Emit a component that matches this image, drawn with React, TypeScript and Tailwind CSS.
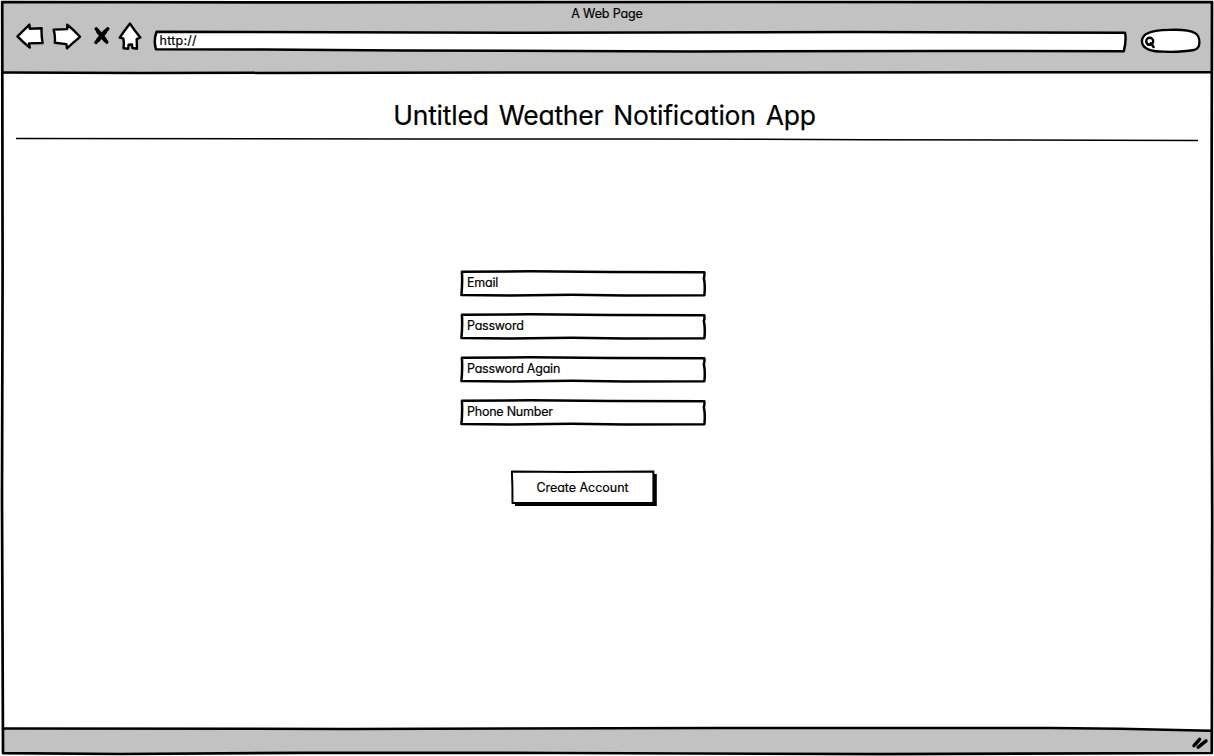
import type { ReactNode } from 'react';

const ink = {
  stroke: '#000',
  strokeLinejoin: 'round' as const,
  strokeLinecap: 'round' as const,
};

function BackIcon() {
  return (
    <svg className="block" width="28" height="27" viewBox="0 0 28 27">
      <path d="M1.5 13.4 L13.4 1.6 L13.8 5.8 L25.6 5.3 Q25.2 12 26.6 20 L13 20.4 L13.8 24.6 Q6.4 18.8 1.5 13.4Z" fill="#fff" strokeWidth="2.4" {...ink} />
    </svg>
  );
}

function ForwardIcon() {
  return (
    <svg className="block" width="30" height="27" viewBox="0 0 30 27">
      <path d="M1.7 6.6 L15.2 6.1 L15.3 1.7 Q22 7 28 13.8 Q20.8 19.8 15 25.4 L14.4 21.1 L2.8 19.7 Q3.4 13 1.7 6.6Z" fill="#fff" strokeWidth="2.4" {...ink} />
    </svg>
  );
}

function StopIcon() {
  return (
    <svg className="block" width="18" height="20" viewBox="0 0 18 20">
      <path d="M3.2 2.8 Q6 6.6 8.6 9.4 Q11.2 13 13.8 16.2 M14.8 2.8 Q11.4 6 8.6 9.4 Q6 13.4 2.9 16.4" fill="none" strokeWidth="3.5" {...ink} />
      <path d="M5.2 5.6 L12 13.8 M12 6 L5.2 13.8" fill="none" strokeWidth="4.2" {...ink} />
    </svg>
  );
}

function HomeIcon() {
  return (
    <svg className="block" width="24" height="29" viewBox="0 0 24 29">
      <path d="M12 1.6 Q16.4 8.4 22.3 15.5 L18.7 17.2 L19 26.7 L14.4 26 L13.9 22.5 L10.6 22.7 L10.2 26.7 L5.5 26.2 Q6.2 20 5.2 16.4 L1.8 15.5 Q6.6 8.6 12 1.6Z" fill="#fff" strokeWidth="2.4" {...ink} />
    </svg>
  );
}

function AddressOutline() {
  return (
    <svg className="absolute inset-0 block" width="974" height="23" viewBox="0 0 974 23">
      <path d="M3.6 1.8 L380 2.7 L700 2 L972 2.8 Q973.6 10 970.8 21.2 L790 21 L540 21.5 L250 20.4 L110 19.4 L3 19.3 Q0.3 10.5 3.6 1.8Z" fill="#fff" strokeWidth="2.5" {...ink} />
    </svg>
  );
}

function SearchBox() {
  return (
    <svg className="block" width="62" height="26" viewBox="0 0 62 26">
      <path d="M30 1.9 Q48 1.1 55.3 5.2 Q59.5 7.6 59.4 14.8 Q59.3 20.8 54 22 Q42 24.2 24 23.7 Q7 24 3 17.2 Q-.2 10.8 6.2 5.9 Q14 1.8 30 1.9Z" fill="#fff" strokeWidth="2.3" {...ink} />
      <circle cx="9.7" cy="13.2" r="3.5" fill="none" strokeWidth="2.4" {...ink} />
      <path d="M10.8 15.2 L13.6 19 M7.6 16.4 L9 16.8" fill="none" strokeWidth="2.5" {...ink} />
    </svg>
  );
}

function FieldOutline() {
  return (
    <svg className="absolute inset-0 block" width="246" height="27" viewBox="0 0 246 27">
      <path d="M1.9 1.8 L70 1.3 L150 2 L244.3 2.2 Q244.8 6 243.8 8 Q245.4 15 244.4 25.2 L165 25.4 L112 24.8 L50 25.4 L1.4 25.1 Q2.6 13 1.9 1.8Z" fill="#fff" strokeWidth="2.5" {...ink} />
    </svg>
  );
}

function Field({ children }: { children: ReactNode }) {
  return (
    <div className="relative h-[27px] w-[246px]">
      <FieldOutline />
      <span className="relative block pl-[7px] pt-[3px] text-[12.5px] leading-[20px] tracking-[-0.23px]">{children}</span>
    </div>
  );
}

export default function App() {
  return (
    <div className="relative flex h-[756px] w-[1214px] flex-col overflow-hidden bg-white font-['Inter','Liberation_Sans',sans-serif] text-black [-webkit-text-stroke:0.2px_black] [font-feature-settings:'cv11']">
      <header className="mx-[2px] mt-[2px] flex h-[70px] shrink-0 flex-col bg-[#c2c2c2]">
        <div className="flex h-[22px] justify-center pt-[2px] text-[12.5px] leading-[20px] tracking-[-0.12px]">A Web Page</div>
        <div className="flex items-start pl-[13.5px]">
          <div className="mt-[-1px]"><BackIcon /></div>
          <div className="ml-[8px] mt-[-1px]"><ForwardIcon /></div>
          <div className="ml-[11px] mt-[2px]"><StopIcon /></div>
          <div className="ml-[7px] mt-[-2px]"><HomeIcon /></div>
          <div className="relative ml-[11px] mt-[6px] h-[23px] w-[974px]">
            <AddressOutline />
            <span className="relative block pt-[1px] pl-[7px] text-[12.5px] leading-[20px] tracking-[0.25px]">http://</span>
          </div>
          <div className="ml-[13.5px] mt-[4px]"><SearchBox /></div>
        </div>
      </header>

      <main className="flex flex-1 flex-col">
        <h1 className="mt-[25px] pr-[5px] text-center text-[26.5px] leading-[36px] font-normal tracking-[-0.23px] [word-spacing:2.8px]">
          Untitled Weather Notification App
        </h1>
        <svg className="ml-[16px] mt-[4px] block shrink-0" width="1182" height="5" viewBox="0 0 1182 5">
          <path d="M0 1.5 L400 1.9 L634 2 L850 2.7 L1182 3.5" fill="none" strokeWidth="1.5" {...ink} />
        </svg>
        <form className="ml-[460px] mt-[128px] flex w-[246px] flex-col gap-[16px]">
          <Field>Email</Field>
          <Field>Password</Field>
          <Field>Password Again</Field>
          <Field>Phone Number</Field>
          <button type="button" className="relative ml-[50px] mt-[28px] h-[37px] w-[148px]">
            <svg className="absolute inset-0 block" width="148" height="37" viewBox="0 0 148 37">
              <path d="M5 34.2 L145 34.2 L145 4" fill="none" stroke="#000" strokeWidth="3.6" />
              <path d="M1.9 1.5 L60 2 L143.4 1.5 L143.4 32.7 L2.5 33 Q2.6 17 1.9 1.5Z" fill="#fff" strokeWidth="2" {...ink} />
            </svg>
            <span className="relative block pr-[3px] pb-[1px] text-[12.5px] leading-[32px] tracking-[-0.03px]">Create Account</span>
          </button>
        </form>
      </main>

      <footer className="flex h-[28px] shrink-0 justify-end">
        <svg className="block" width="1214" height="28" viewBox="0 0 1214 28">
          <path d="M3 .6 L350 1.1 L720 .1 L1050 .2 L1120 .7 L1212 2.8 L1212 25 L3 25Z" fill="#c2c2c2" />
          <path d="M1194 17.6 L1199.6 11.4 M1198.2 19.2 L1206 12.8" fill="none" strokeWidth="3.5" {...ink} />
        </svg>
      </footer>

      <svg className="pointer-events-none absolute inset-0 block" width="1214" height="756" viewBox="0 0 1214 756">
        <path d="M2.2 2 L320 2.4 L700 2 L1212 2.2 L1211.5 230 L1212.2 520 L1211.8 753 L880 754.2 L560 753 L300 752.8 L120 754 L3 753.2 L2 500 L2.6 270Z" fill="none" strokeWidth="2.7" {...ink} />
        <path d="M3 72.5 L140 73 L600 72.5 L1211 72.3 M3 728.4 L350 729 L720 728 L1050 728 L1120 728.7 L1211 730.8" fill="none" strokeWidth="2.5" {...ink} />
      </svg>
    </div>
  );
}
